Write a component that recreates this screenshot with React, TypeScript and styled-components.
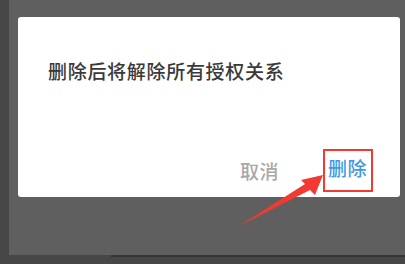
import React from 'react';
import styled, { createGlobalStyle } from 'styled-components';

const GlobalStyle = createGlobalStyle`
  html, body {
    margin: 0;
    padding: 0;
    background: #5f5f5f;
  }
  body {
    font-family: "Noto Sans CJK SC", "Noto Sans", sans-serif;
  }
`;

const Screen = styled.div`
  position: relative;
  display: flex;
  width: 405px;
  height: 264px;
  overflow: hidden;
  background: #5f5f5f;
`;

const LeftEdge = styled.div`
  width: 9px;
  flex-shrink: 0;
  background: #474747;
`;

const Main = styled.div`
  flex: 1;
  display: flex;
  flex-direction: column;
`;

const Stage = styled.div`
  flex: 1;
  padding: 17px 5px 0 9px;
`;

const BottomBar = styled.div`
  height: 9px;
  background: #474747;
  display: flex;
`;

const BottomGap = styled.div`
  width: 102px;
`;

const BottomLine = styled.div`
  flex: 1;
  border-top: 2px solid #363636;
`;

const Dialog = styled.div`
  height: 180px;
  background: #ffffff;
  border-radius: 3px;
  display: flex;
  flex-direction: column;
  justify-content: space-between;
  box-sizing: border-box;
  padding: 41px 27px 5px 30px;
`;

const Message = styled.div`
  font-size: 19px;
  font-weight: 500;
  line-height: 26px;
  letter-spacing: 0.7px;
  color: #3a3a3a;
  white-space: nowrap;
`;

const Actions = styled.div`
  display: flex;
  justify-content: flex-end;
  align-items: center;
  gap: 44px;
`;

const ActionButton = styled.button<{ $primary?: boolean }>`
  border: none;
  background: none;
  padding: 0;
  font-family: inherit;
  font-size: 19px;
  font-weight: 500;
  line-height: 26px;
  letter-spacing: 0.5px;
  color: ${(p) => (p.$primary ? '#3f9be4' : '#a8a8a8')};
`;

const Highlight = styled.div`
  border: 2px solid #f23a32;
  padding: 4px 4px 9px 3px;
  display: flex;
`;

const Annotation = styled.svg`
  position: absolute;
  left: 0;
  top: 0;
  pointer-events: none;
`;

export default function App() {
  return (
    <>
      <GlobalStyle />
      <Screen>
        <LeftEdge />
        <Main>
          <Stage>
            <Dialog>
              <Message>删除后将解除所有授权关系</Message>
              <Actions>
                <ActionButton>取消</ActionButton>
                <Highlight>
                  <ActionButton $primary>删除</ActionButton>
                </Highlight>
              </Actions>
            </Dialog>
          </Stage>
          <BottomBar>
            <BottomGap />
            <BottomLine />
          </BottomBar>
        </Main>
        <Annotation width="405" height="264" viewBox="0 0 405 264">
          <polygon
            points="239,226 305,184 301,180 323,175 315,195 310,190"
            fill="#f23a32"
          />
        </Annotation>
      </Screen>
    </>
  );
}
